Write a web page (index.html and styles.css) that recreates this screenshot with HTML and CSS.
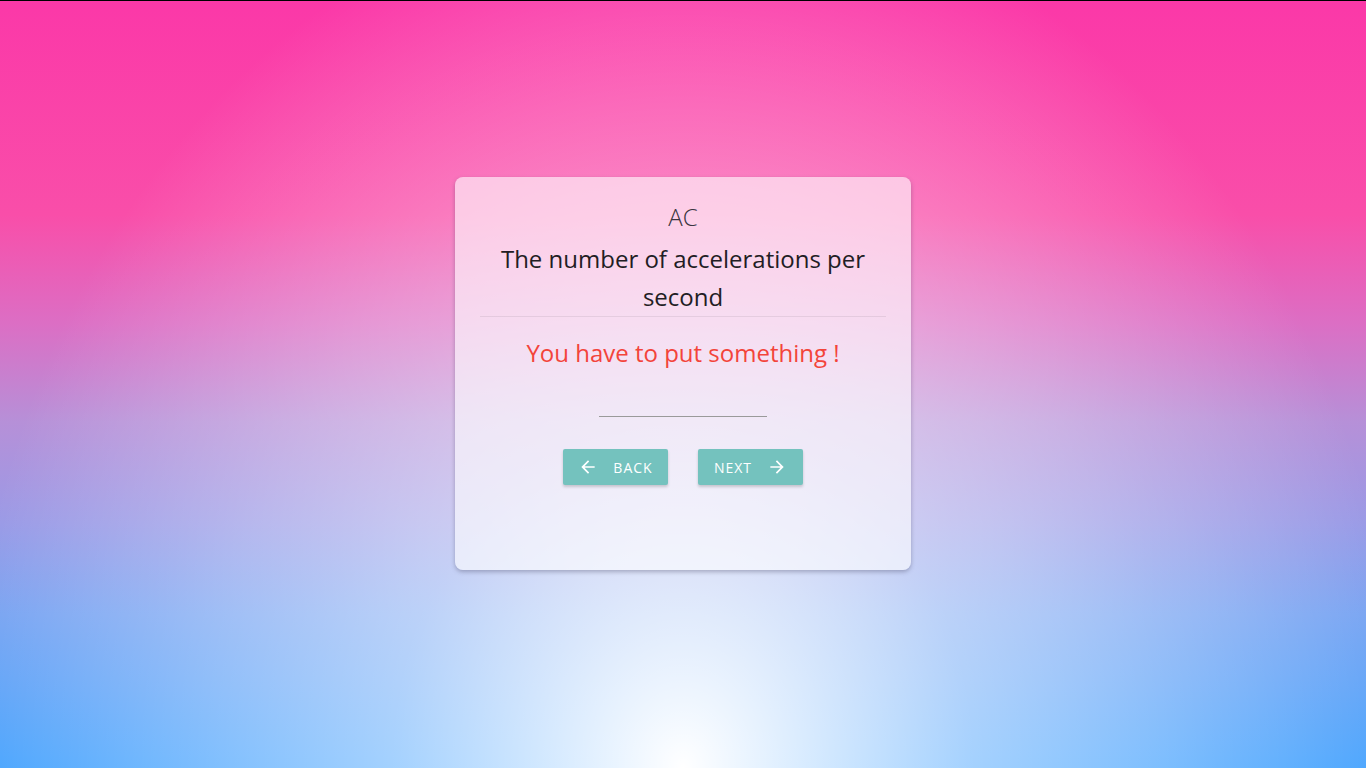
FILE: index.html
```html
<!DOCTYPE html>
<html>
<head>
<meta charset="utf-8">
<link rel="stylesheet" href="styles.css">
</head>
<body>
<div class="page">
  <div class="card">
    <div class="abbr">AC</div>
    <div class="question">The number of accelerations per second</div>
    <div class="divider"></div>
    <div class="error">You have to put something !</div>
    <div class="field"><input class="answer" type="text"></div>
    <div class="actions">
      <button class="btn">
        <svg width="20" height="20" viewBox="0 0 24 24"><path d="M20 11H7.83l5.59-5.59L12 4l-8 8 8 8 1.41-1.41L7.83 13H20v-2z" fill="#fff"/></svg>
        <span>Back</span>
      </button>
      <button class="btn">
        <span>Next</span>
        <svg width="20" height="20" viewBox="0 0 24 24"><path d="M12 4l-1.41 1.41L16.17 11H4v2h12.17l-5.58 5.59L12 20l8-8z" fill="#fff"/></svg>
      </button>
    </div>
  </div>
</div>
</body>
</html>
```
FILE: styles.css
```css
html, body {
  margin: 0;
  height: 100%;
}
body {
  font-family: "Open Sans", "Noto Sans", sans-serif;
  border-top: 1px solid #000;
  box-sizing: border-box;
  background:
    radial-gradient(ellipse 720px 880px at 50% 100%, rgba(255,255,255,1) 0%, rgba(255,255,255,0.72) 22%, rgba(255,255,255,0.5) 40%, rgba(255,255,255,0.3) 65%, rgba(255,255,255,0) 100%),
    linear-gradient(to bottom, #fb38a8 0%, #f94ea9 28%, #dc6ec4 42%, #b690d8 55%, #9a9ae6 68%, #78a4f2 80%, #48a4fe 100%);
}
.page {
  height: 100%;
  display: flex;
  justify-content: center;
  align-items: flex-start;
  padding-top: 176px;
  box-sizing: border-box;
}
.card {
  width: 456px;
  height: 393px;
  box-sizing: border-box;
  padding: 24px 25px 0;
  background: rgba(255, 255, 255, 0.6);
  border-radius: 8px;
  box-shadow: 0 2px 4px rgba(60, 60, 90, 0.35);
  display: flex;
  flex-direction: column;
  align-items: stretch;
  text-align: center;
}
.abbr {
  font-size: 24px;
  font-weight: 300;
  color: #3a3540;
  line-height: 32px;
}
.question {
  font-size: 24px;
  color: #221d24;
  line-height: 38px;
  padding: 0 10px;
  margin-top: 7px;
}
.divider {
  height: 1px;
  background: rgba(0, 0, 0, 0.07);
  margin-top: 0;
}
.error {
  color: #f3443a;
  font-size: 24px;
  line-height: 32px;
  margin-top: 20px;
}
.field {
  display: flex;
  justify-content: center;
  margin-top: 15px;
}
.answer {
  width: 168px;
  height: 32px;
  border: 0;
  border-bottom: 1px solid #9a9a9a;
  background: transparent;
  outline: none;
  padding: 0;
}
.actions {
  display: flex;
  justify-content: center;
  gap: 30px;
  margin-top: 32px;
}
.btn {
  width: 105px;
  height: 36px;
  border: 0;
  border-radius: 2px;
  background: #74c2be;
  color: #fff;
  font-family: inherit;
  font-size: 14px;
  letter-spacing: 1px;
  text-transform: uppercase;
  display: flex;
  align-items: center;
  justify-content: center;
  gap: 15px;
  box-shadow: 0 2px 3px rgba(0, 0, 0, 0.18);
  padding: 0;
}
```
